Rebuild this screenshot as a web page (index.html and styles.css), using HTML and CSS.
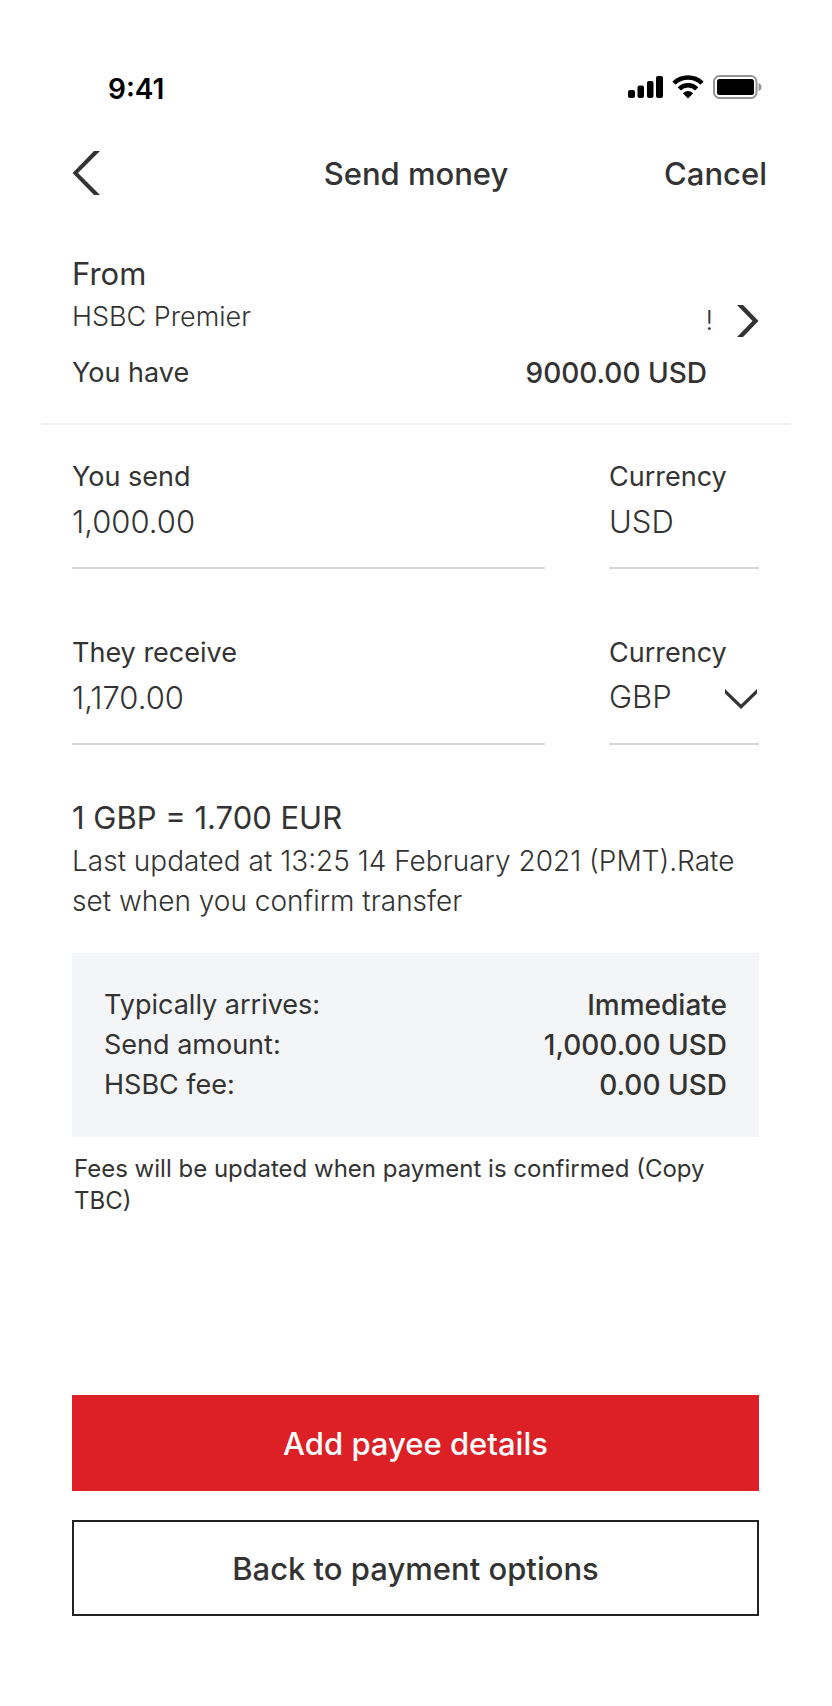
FILE: index.html
```html
<!DOCTYPE html>
<html lang="en">
<head>
    <meta charset="utf-8">
    <meta name="viewport" content="width=device-width, initial-scale=1">
    <title>Send money</title>
    <link rel="stylesheet" href="styles.css">
</head>

<body>
    <div class="status">
        <span class="time">9:41</span>
        <svg width="134" height="24" viewBox="0 0 134 24">
            <rect x="0" y="15" width="7" height="8" rx="2"></rect>
            <rect x="9.5" y="10.5" width="6.5" height="12.5" rx="2"></rect>
            <rect x="19" y="6" width="6.5" height="17" rx="2"></rect>
            <rect x="28" y="1" width="7" height="22" rx="2"></rect>
            <path class="wave" d="M46 8.2A20 20 0 0 1 74 8.2M51.3 13.8A12.4 12.4 0 0 1 68.7 13.8"></path>
            <path d="M54.8 18.2Q60 13.8 65.2 18.2L60 23.4Z"></path>
            <rect class="shell" x="86" y="1" width="42.5" height="22" rx="5.5"></rect>
            <rect x="89" y="4" width="37" height="16" rx="2.5"></rect>
            <path class="nub" d="M130.5 8Q133.5 9 133.5 12T130.5 16Z"></path>
        </svg>
    </div>

    <header>
        <button class="back" aria-label="Back">
            <svg width="28" height="44" viewBox="0 0 28 44">
                <path d="M22 0H28L6 22L28 44H22L0.5 22Z"></path>
            </svg>
        </button>
        <h1>Send money</h1>
        <button class="cancel">Cancel</button>
    </header>

    <main>
        <section class="from">
            <h2>From</h2>
            <div class="account">
                <span>HSBC Premier</span>
                <button aria-label="Change account">
                    <span>!</span>
                    <svg width="22" height="32" viewBox="0 0 22 32">
                        <path d="M0 0H6L21.5 16L6 32H0L15.5 16Z"></path>
                    </svg>
                </button>
            </div>
            <div class="balance">
                <span>You have</span>
                <strong>9000.00 USD</strong>
            </div>
        </section>

        <form id="transfer">
            <div class="field">
                <label for="send">You send</label>
                <input id="send" type="text" inputmode="decimal" value="1,000.00">
            </div>
            <div class="field">
                <label for="send-currency">Currency</label>
                <input id="send-currency" type="text" value="USD" readonly>
            </div>
            <div class="field">
                <label for="receive">They receive</label>
                <input id="receive" type="text" inputmode="decimal" value="1,170.00">
            </div>
            <div class="field">
                <label for="receive-currency">Currency</label>
                <div class="select">
                    <select id="receive-currency">
                        <option>GBP</option>
                        <option>EUR</option>
                        <option>USD</option>
                    </select>
                    <svg width="34" height="20" viewBox="0 0 34 20">
                        <path d="M1 0L17 15.5L33 0V4.5L17 20L1 4.5Z"></path>
                    </svg>
                </div>
            </div>
        </form>

        <section class="rate">
            <h2>1 GBP = 1.700 EUR</h2>
            <p>Last updated at 13:25 14 February 2021 (PMT).Rate set when you confirm transfer</p>
        </section>

        <dl class="summary">
            <dt>Typically arrives:</dt>
            <dd>Immediate</dd>
            <dt>Send amount:</dt>
            <dd>1,000.00 USD</dd>
            <dt>HSBC fee:</dt>
            <dd>0.00 USD</dd>
        </dl>
        <p class="note">Fees will be updated when payment is confirmed (Copy TBC)</p>

        <div class="actions">
            <button class="primary" type="submit" form="transfer">Add payee details</button>
            <button class="secondary">Back to payment options</button>
        </div>
    </main>
</body>
</html>
```
FILE: styles.css
```css
* {
    box-sizing: border-box;
}
body {
    margin: 0;
    padding: 69px 41px 90px;
    background: #fff;
    color: #333;
    font-family: Inter, "Liberation Sans", sans-serif;
    font-size: 27px;
    line-height: 40px;
}
h1, h2, p, dl, dd {
    margin: 0;
}
h1, h2 {
    font-size: 31px;
}
h2 {
    margin-bottom: 2px;
    font-weight: 400;
    line-height: 42px;
}
button, input, select {
    margin: 0;
    padding: 0;
    border: 0;
    border-radius: 0;
    background: none;
    color: inherit;
    font: inherit;
}
svg {
    display: block;
    fill: #333;
}

.status {
    display: flex;
    justify-content: space-between;
    padding: 0 29px 0 67px;
    color: #000;
}
.status svg {
    margin-top: 6px;
    fill: #000;
}
.status .wave {
    fill: none;
    stroke: #000;
    stroke-width: 4.6px;
}
.status .shell {
    fill: none;
    stroke: #949494;
    stroke-width: 2px;
}
.status .nub {
    fill: #949494;
}
.time {
    font-size: 28px;
    font-weight: 600;
}

header {
    display: grid;
    grid-template-columns: 1fr auto 1fr;
    align-items: center;
    height: 64px;
    margin: 32px 0 48px;
    padding: 0 24px;
}
h1, .cancel {
    padding-top: 2px;
    font-size: 31px;
    font-weight: 500;
}
.back {
    justify-self: start;
    padding-left: 7px;
}
.cancel {
    justify-self: end;
}

main {
    padding: 0 32px 0 31px;
}
.from {
    margin: 0 -32px 0 -31px;
    padding: 0 32px 30px 31px;
    border-bottom: 2px solid #f0f0f0;
}
.account, .balance {
    display: flex;
    justify-content: space-between;
}
.account {
    margin-bottom: 8px;
    font-weight: 300;
}
.account button {
    display: flex;
    align-items: center;
    gap: 24px;
    height: 48px;
}
.balance {
    padding-right: 52px;
}
.balance strong {
    font-size: 28px;
    font-weight: 500;
}

form {
    display: grid;
    grid-template-columns: 1fr 150px;
    gap: 64px;
    margin: 32px 0 52px;
}
.field label {
    display: block;
    margin-bottom: 4px;
}
.field input, .field select {
    display: block;
    width: 100%;
    height: 68px;
    padding-bottom: 26px;
    border-bottom: 2px solid #d7d7d7;
    font-size: 31px;
    font-weight: 300;
    line-height: 40px;
    outline: 0;
}
.select {
    position: relative;
}
.select select {
    appearance: none;
}
/* arrow lies over the select */
.select svg {
    position: absolute;
    top: 12px;
    right: 1px;
    pointer-events: none;
}

.rate p {
    font-size: 28px;
    font-weight: 300;
}
.summary {
    display: grid;
    grid-template-columns: auto auto;
    margin-top: 32px;
    padding: 32px;
    background: #f4f5f7;
}
.summary dd {
    font-size: 28px;
    font-weight: 500;
    text-align: right;
}
.note {
    margin-top: 16px;
    padding: 0 2px;
    font-size: 24px;
    line-height: 32px;
}

.actions {
    display: grid;
    gap: 29px;
    margin-top: 178px;
}
.actions button {
    height: 96px;
    padding-top: 2px;
    font-size: 31px;
    font-weight: 500;
}
.primary {
    background: #dd1f26;
    color: #fff;
}
.actions .secondary {
    border: 2px solid #222;
}
```
